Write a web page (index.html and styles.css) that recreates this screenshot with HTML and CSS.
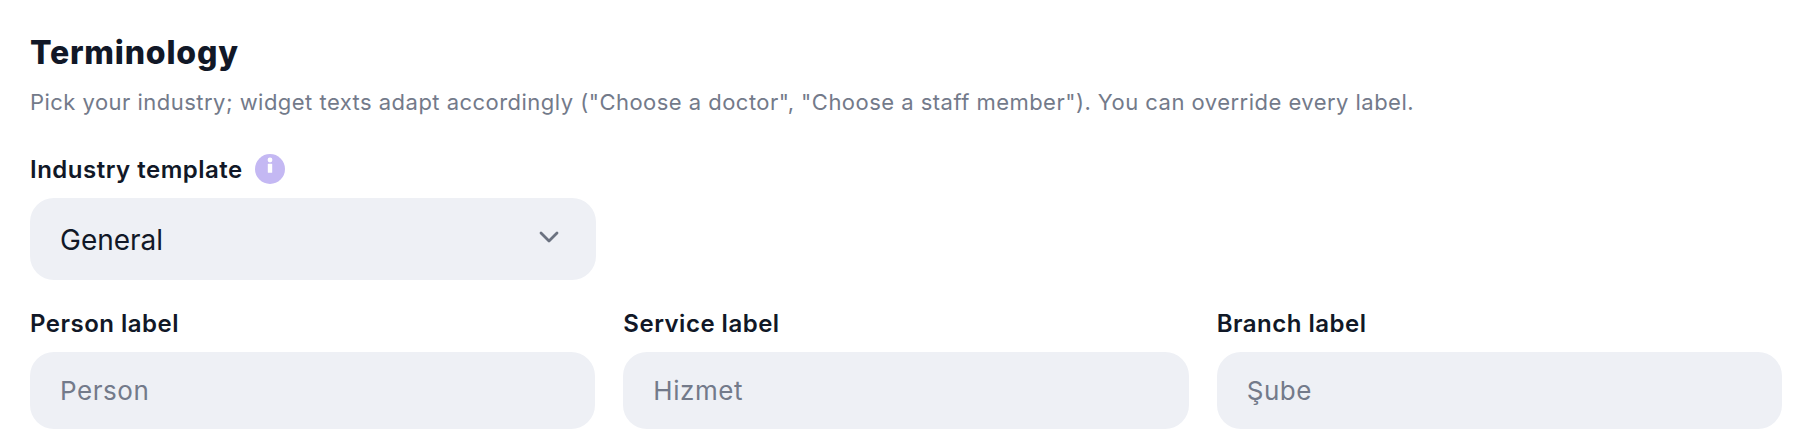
FILE: index.html
```html
<!DOCTYPE html>
<html lang="en">
<head>
<meta charset="UTF-8">
<meta name="viewport" content="width=device-width, initial-scale=1.0">
<title>Terminology</title>
<link rel="stylesheet" href="styles.css">
</head>
<body>

<section class="section">
    <h2 class="title">Terminology</h2>
    <p class="subtitle">Pick your industry; widget texts adapt accordingly ("Choose a doctor", "Choose a staff member"). You can override every label.</p>

    <div class="field template-field">
        <label class="label" for="industry">
            Industry template
            <span class="info">
                <svg viewBox="0 0 30 30" width="30" height="30">
                    <circle cx="15" cy="6" r="2.4" fill="#fff"/>
                    <rect x="12.8" y="9.8" width="4.4" height="9" rx="0.6" fill="#fff"/>
                </svg>
            </span>
        </label>
        <div class="select-wrap">
            <select class="select" id="industry">
                <option>General</option>
            </select>
            <svg class="chevron" viewBox="0 0 20 12" width="20" height="12">
                <path d="M2 2l8 8 8-8" fill="none" stroke="#6b7280" stroke-width="2.8" stroke-linecap="round" stroke-linejoin="round"/>
            </svg>
        </div>
    </div>

    <div class="row">
        <div class="field">
            <label class="label" for="person">Person label</label>
            <input class="input" id="person" placeholder="Person">
        </div>
        <div class="field">
            <label class="label" for="service">Service label</label>
            <input class="input" id="service" placeholder="Hizmet">
        </div>
        <div class="field">
            <label class="label" for="branch">Branch label</label>
            <input class="input" id="branch" placeholder="Şube">
        </div>
    </div>
</section>

</body>
</html>
```

FILE: styles.css
```css
/* Basic Styling */
body {
    margin: 0;
    background: #fff;
    color: #111827;
    font-family: Inter, "Noto Sans", sans-serif;
}

.section {
    padding: 33px 30px 0;
}

.title {
    margin: 0;
    font-size: 32px;
    line-height: 40px;
    font-weight: 800;
    letter-spacing: 0.8px;
}

.subtitle {
    margin: 15px 0 0;
    font-size: 22px;
    line-height: 28px;
    letter-spacing: 0.47px;
    color: #737a8a;
}

.field {
    display: flex;
    flex-direction: column;
}

.template-field {
    width: 566px;
    margin-top: 38px;
}

.label {
    display: flex;
    align-items: center;
    gap: 12px;
    height: 30px;
    margin-bottom: 14px;
    font-size: 24px;
    font-weight: 600;
    letter-spacing: 0.5px;
}

.info {
    width: 30px;
    height: 30px;
    border-radius: 50%;
    background: #c4b8f3;
}

.info svg {
    display: block;
}

.select-wrap {
    position: relative;
}

.select, .input {
    display: block;
    width: 100%;
    box-sizing: border-box;
    padding: 0 30px;
    border: none;
    border-radius: 24px;
    background: #eef0f5;
    font-family: inherit;
    color: #111827;
    outline: none;
}

.select {
    height: 82px;
    padding-top: 2px;
    font-size: 28px;
    appearance: none;
}

.input {
    height: 77px;
    font-size: 26px;
    letter-spacing: 0.55px;
}

.input::placeholder {
    color: #737a8a;
    opacity: 1;
}

.chevron {
    position: absolute;
    top: 33px;
    right: 37px;
}

.row {
    display: grid;
    grid-template-columns: repeat(3, 1fr);
    gap: 28px;
    margin-top: 28px;
}
```
